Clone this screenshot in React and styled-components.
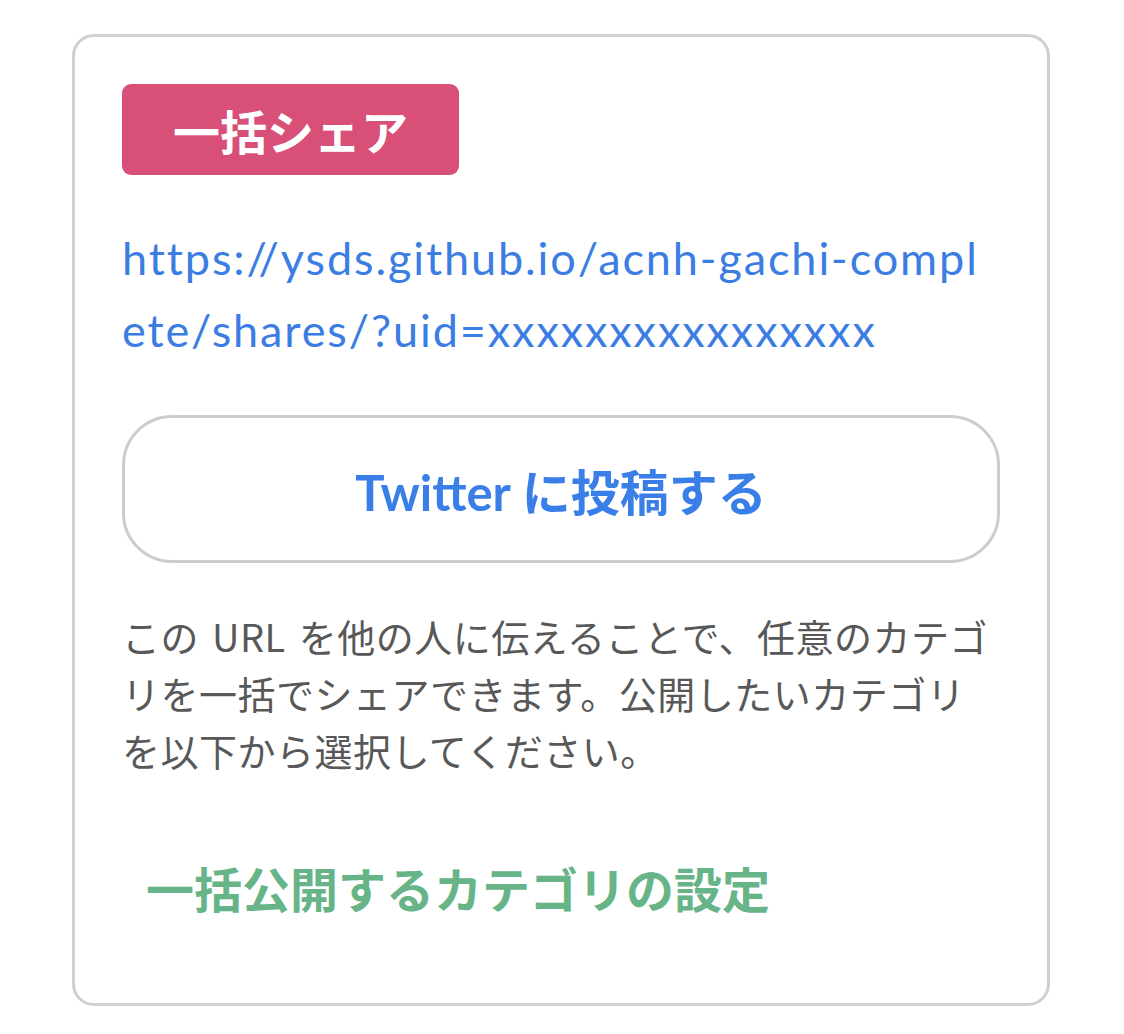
import styled, { createGlobalStyle } from "styled-components";

const GlobalStyle = createGlobalStyle`
  html, body {
    margin: 0;
    padding: 0;
    background: #fff;
  }
  body {
    font-family: Lato, "Noto Sans CJK JP", sans-serif;
  }
`;

const Page = styled.div`
  padding: 34px 74px 28px 72px;
`;

const Card = styled.section`
  box-sizing: border-box;
  border: 3px solid #cfcfcf;
  border-radius: 22px;
  padding: 47px 47px 81px;
  background: #fff;
`;

const Badge = styled.h2`
  display: inline-block;
  margin: 0;
  height: 91px;
  padding: 0 51px;
  box-sizing: border-box;
  border-radius: 9px;
  background: #d85078;
  color: #fff;
  font-family: "Noto Sans CJK JP", sans-serif;
  font-size: 47px;
  font-weight: 700;
  line-height: 91px;
`;

const ShareUrl = styled.a`
  display: block;
  margin-top: 47px;
  color: #3b7de3;
  font-family: Lato, "Noto Sans CJK JP", sans-serif;
  font-size: 45px;
  letter-spacing: 1.9px;
  line-height: 72px;
  text-decoration: none;
  word-break: break-all;
`;

const TweetButton = styled.button`
  display: flex;
  align-items: center;
  justify-content: center;
  width: 100%;
  height: 148px;
  margin-top: 49px;
  box-sizing: border-box;
  border: 3px solid #cccccc;
  border-radius: 50px;
  background: #fff;
  color: #3a7ee8;
  font-family: Lato, "Noto Sans CJK JP", sans-serif;
  font-size: 49px;
  font-weight: 700;
  cursor: pointer;
`;

const Description = styled.p`
  margin: 44px 4px 0 0;
  color: #585858;
  font-family: "Noto Sans CJK JP", sans-serif;
  font-size: 38px;
  font-weight: 400;
  letter-spacing: 0.5px;
  word-spacing: 4px;
  line-height: 57px;
`;

const SectionTitle = styled.h3`
  margin: 74px 0 0 24px;
  color: #66b487;
  font-family: "Noto Sans CJK JP", sans-serif;
  font-size: 48px;
  font-weight: 700;
  line-height: 70px;
`;

export default function App() {
  const uid = "xxxxxxxxxxxxxxxx";
  const url = "https://ysds.github.io/acnh-gachi-complete/shares/?uid=" + uid;

  return (
    <Page>
      <GlobalStyle />
      <Card>
        <Badge>一括シェア</Badge>
        <ShareUrl href={url}>{url}</ShareUrl>
        <TweetButton>Twitter に投稿する</TweetButton>
        <Description>
          この URL を他の人に伝えることで、任意のカテゴリを一括でシェアできます。公開したいカテゴリを以下から選択してください。
        </Description>
        <SectionTitle>一括公開するカテゴリの設定</SectionTitle>
      </Card>
    </Page>
  );
}
